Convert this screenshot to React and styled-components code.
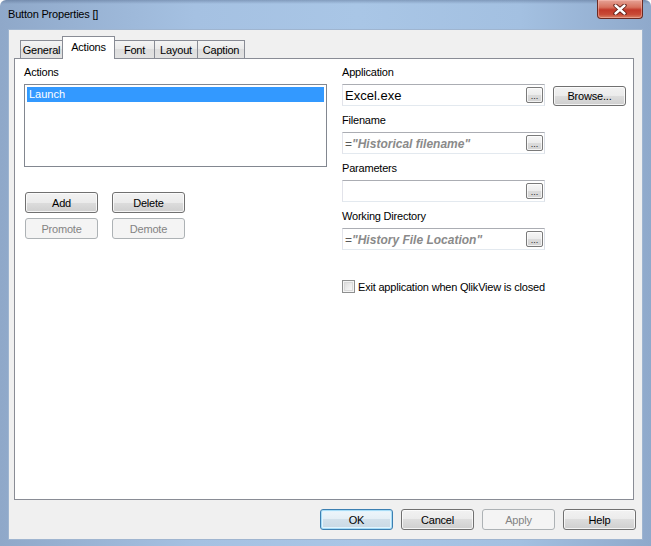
import React from 'react';
import styled, { createGlobalStyle, css } from 'styled-components';

const GlobalStyle = createGlobalStyle`
  html, body {
    margin: 0;
    padding: 0;
    background: #ffffff;
  }
  body {
    font-family: "Liberation Sans", Arial, sans-serif;
    font-size: 11px;
    color: #000;
  }
`;

const Window = styled.div`
  width: 651px;
  height: 546px;
  box-sizing: border-box;
  display: flex;
  flex-direction: column;
  border-radius: 6px 6px 0 0;
  background:
    linear-gradient(to bottom, rgba(60, 80, 115, 0.35) 0, rgba(255, 255, 255, 0) 4px),
    linear-gradient(to right, #8fa8c9 0%, #a5c1e2 30%, #a9c6e6 55%, #a3c0e1 80%, #8fa9cb 100%);
  overflow: hidden;
`;

const TitleBar = styled.div`
  height: 29px;
  flex: none;
  display: flex;
  align-items: flex-start;
`;

const Title = styled.div`
  margin: 7px 0 0 8px;
  line-height: 14px;
  font-size: 11px;
  letter-spacing: -0.2px;
  color: #000;
`;

const CloseButton = styled.div`
  margin-left: auto;
  margin-right: 8px;
  width: 46px;
  height: 19px;
  box-sizing: border-box;
  border: 1px solid #6b2a22;
  border-top: none;
  border-radius: 0 0 4px 4px;
  background: linear-gradient(to bottom, #e6a296 0%, #d7725f 40%, #c2392a 55%, #c84a36 80%, #d88366 100%);
  box-shadow: inset 0 0 0 1px rgba(255, 200, 190, 0.45);
  display: flex;
  align-items: center;
  justify-content: center;
`;

const Client = styled.div`
  flex: 1;
  margin: 0 8px 6px 8px;
  border: 1px solid #9fb5d0;
  background: #f0f0f0;
  display: flex;
  flex-direction: column;
  padding: 6px 8px 9px 5px;
  min-height: 0;
`;

const TabStrip = styled.div`
  height: 22px;
  flex: none;
  display: flex;
  align-items: flex-end;
  padding-left: 6px;
`;

const Tab = styled.div`
  box-sizing: border-box;
  width: ${(p) => p.$width}px;
  margin-left: -1px;
  border: 1px solid #898c95;
  border-bottom: none;
  display: flex;
  justify-content: center;
  font-size: 11px;
  letter-spacing: -0.2px;
  color: #000;
  &:first-child {
    margin-left: 0;
  }
  ${(p) =>
    p.$active
      ? css`
          height: 23px;
          margin-bottom: -1px;
          position: relative;
          z-index: 1;
          background: #ffffff;
          padding-top: 4px;
        `
      : css`
          height: 18px;
          background: linear-gradient(to bottom, #f4f4f4 0%, #e9e9e9 50%, #dedede 50%, #e2e2e2 100%);
          padding-top: 3px;
        `}
`;

const Panel = styled.div`
  flex: 1;
  box-sizing: border-box;
  border: 1px solid #898c95;
  background: #ffffff;
  display: flex;
  gap: 15px;
  padding: 7px 0 0 9px;
`;

const Column = styled.div`
  width: ${(p) => p.$width}px;
  display: flex;
  flex-direction: column;
`;

const Label = styled.div`
  height: 13px;
  line-height: 13px;
  font-size: 11px;
  letter-spacing: -0.2px;
  margin-bottom: 5px;
  white-space: nowrap;
`;

const ListBox = styled.div`
  height: 83px;
  box-sizing: border-box;
  border: 1px solid #828790;
  padding: 2px;
  background: #fff;
`;

const ListItem = styled.div`
  height: 15px;
  line-height: 15px;
  padding-left: 2px;
  font-size: 11px;
  color: ${(p) => (p.$selected ? '#fff' : '#000')};
  background: ${(p) => (p.$selected ? '#3399ff' : 'transparent')};
`;

const ButtonGrid = styled.div`
  margin-top: 25px;
  margin-left: 1px;
  display: grid;
  grid-template-columns: 73px 73px;
  column-gap: 14px;
  row-gap: 5px;
`;

const Button = styled.div`
  box-sizing: border-box;
  width: ${(p) => p.$width || 73}px;
  height: ${(p) => p.$height || 21}px;
  border: 1px solid #707070;
  border-radius: 3px;
  background: linear-gradient(to bottom, #f2f2f2 0%, #ebebeb 50%, #dddddd 50%, #cfcfcf 100%);
  box-shadow: inset 0 0 0 1px rgba(252, 252, 252, 0.8);
  display: flex;
  align-items: center;
  justify-content: center;
  font-size: 11px;
  letter-spacing: -0.2px;
  color: #000;
  ${(p) =>
    p.$disabled &&
    css`
      border-color: #adb2b5;
      background: #f4f4f4;
      box-shadow: none;
      color: #838383;
    `}
  ${(p) =>
    p.$default &&
    css`
      border-color: #3c7fb1;
      background: linear-gradient(to bottom, #eef6fb 0%, #e4eef5 50%, #d2e0ea 50%, #c8d8e4 100%);
      box-shadow: inset 0 0 0 1px #a8dcf6, inset 0 0 0 2px #e3f4fd;
    `}
`;

const Field = styled.div`
  display: flex;
  flex-direction: column;
  margin-bottom: 8px;
`;

const InputRow = styled.div`
  display: flex;
  align-items: center;
`;

const InputBox = styled.div`
  box-sizing: border-box;
  width: 203px;
  height: 22px;
  border: 1px solid #abadb3;
  border-color: #abadb3 #dbdfe6 #e3e9ef #e2e3ea;
  background: #fff;
  display: flex;
  align-items: center;
  padding: 0 1px 0 2px;
`;

const InputText = styled.div`
  flex: 1;
  white-space: nowrap;
  overflow: hidden;
  font-size: 13px;
  color: #000;
`;

const Eq = styled.span`
  font-size: 12px;
  color: #5a5a5a;
`;

const Expr = styled.span`
  font-size: 12px;
  font-weight: bold;
  font-style: italic;
  color: #8a8a8a;
`;

const DotsButton = styled.div`
  box-sizing: border-box;
  width: 17px;
  height: 16px;
  border: 1px solid #7a7a7a;
  border-radius: 2px;
  background: linear-gradient(to bottom, #f6f6f6 0%, #ececec 50%, #dcdcdc 50%, #d2d2d2 100%);
  box-shadow: inset 0 0 0 1px rgba(255, 255, 255, 0.7);
  display: flex;
  align-items: flex-end;
  justify-content: center;
  font-size: 9px;
  line-height: 11px;
  color: #222;
`;

const BrowseButton = styled(Button)`
  margin-left: 8px;
  margin-top: 1px;
`;

const CheckRow = styled.div`
  margin-top: 22px;
  display: flex;
  align-items: center;
  font-size: 11px;
  letter-spacing: -0.2px;
`;

const CheckBox = styled.div`
  box-sizing: border-box;
  width: 13px;
  height: 13px;
  border: 1px solid #8e8f8f;
  background: linear-gradient(135deg, #d6d6d6 0%, #f0f0f0 60%, #fbfbfb 100%);
  box-shadow: inset 0 0 0 1px #f4f4f4, inset 0 0 0 2px #d9d9d9;
  margin-right: 3px;
`;

const Footer = styled.div`
  flex: none;
  margin-top: 9px;
  margin-right: -2px;
  display: flex;
  justify-content: flex-end;
  gap: 8px;
`;

const tabs = [
  { label: 'General', width: 43 },
  { label: 'Actions', width: 53, active: true },
  { label: 'Font', width: 41 },
  { label: 'Layout', width: 44 },
  { label: 'Caption', width: 48 },
];

const fields = [
  { label: 'Application', value: <InputText>Excel.exe</InputText>, browse: true },
  {
    label: 'Filename',
    value: (
      <InputText>
        <Eq>=</Eq>
        <Expr>"Historical filename"</Expr>
      </InputText>
    ),
  },
  { label: 'Parameters', value: <InputText /> },
  {
    label: 'Working Directory',
    value: (
      <InputText>
        <Eq>=</Eq>
        <Expr>"History File Location"</Expr>
      </InputText>
    ),
  },
];

const CloseGlyph = () => (
  <svg width="14" height="11" viewBox="0 0 14 11">
    <path d="M2.5 1.5 L11.5 9.5 M11.5 1.5 L2.5 9.5" stroke="#5a1810" strokeWidth="4.2" strokeLinecap="round" fill="none" />
    <path d="M2.5 1.5 L11.5 9.5 M11.5 1.5 L2.5 9.5" stroke="#ffffff" strokeWidth="2.4" strokeLinecap="round" fill="none" />
  </svg>
);

const App = () => {
  return (
    <>
      <GlobalStyle />
      <Window>
        <TitleBar>
          <Title>Button Properties []</Title>
          <CloseButton>
            <CloseGlyph />
          </CloseButton>
        </TitleBar>
        <Client>
          <TabStrip>
            {tabs.map((t) => (
              <Tab key={t.label} $width={t.width} $active={t.active}>
                {t.label}
              </Tab>
            ))}
          </TabStrip>
          <Panel>
            <Column $width={303}>
              <Label>Actions</Label>
              <ListBox>
                <ListItem $selected>Launch</ListItem>
              </ListBox>
              <ButtonGrid>
                <Button>Add</Button>
                <Button>Delete</Button>
                <Button $disabled>Promote</Button>
                <Button $disabled>Demote</Button>
              </ButtonGrid>
            </Column>
            <Column $width={290}>
              {fields.map((f) => (
                <Field key={f.label}>
                  <Label>{f.label}</Label>
                  <InputRow>
                    <InputBox>
                      {f.value}
                      <DotsButton>...</DotsButton>
                    </InputBox>
                    {f.browse && <BrowseButton $height={20}>Browse...</BrowseButton>}
                  </InputRow>
                </Field>
              ))}
              <CheckRow>
                <CheckBox />
                Exit application when QlikView is closed
              </CheckRow>
            </Column>
          </Panel>
          <Footer>
            <Button $default>OK</Button>
            <Button>Cancel</Button>
            <Button $disabled>Apply</Button>
            <Button>Help</Button>
          </Footer>
        </Client>
      </Window>
    </>
  );
};

export default App;
